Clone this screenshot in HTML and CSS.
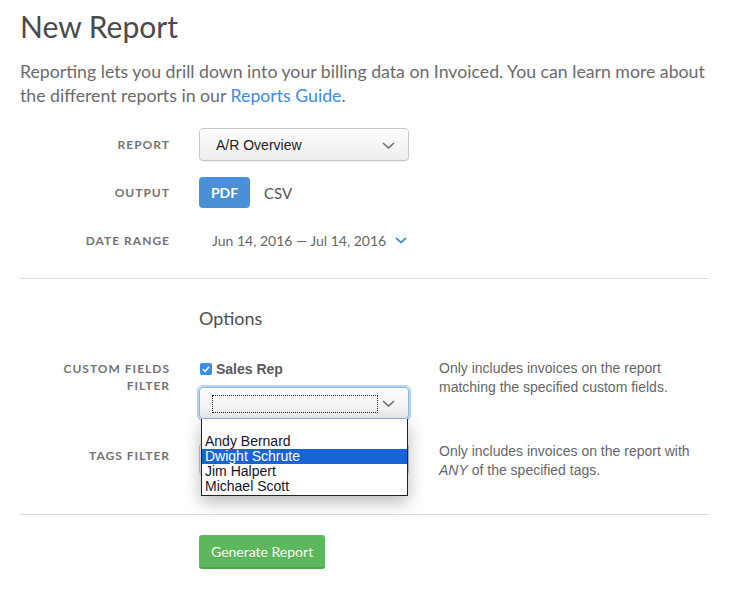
FILE: index.html
```html
<!DOCTYPE html>
<html>
<head>
<meta charset="utf-8">
<link rel="stylesheet" href="styles.css">
</head>
<body>
<div class="page">
  <h1 class="title">New Report</h1>
  <p class="intro">Reporting lets you drill down into your billing data on Invoiced. You can learn more about the different reports in our <a class="link" href="#">Reports Guide</a>.</p>

  <div class="section-top">
    <div class="row row-report">
      <div class="lbl">Report</div>
      <div class="ctrl">
        <div class="select">
          <span class="select-text">A/R Overview</span>
          <svg class="chev" width="13" height="7" viewBox="0 0 13 7"><path d="M1 1 L6.5 6 L12 1" fill="none" stroke="#6b6b6b" stroke-width="1.5"/></svg>
        </div>
      </div>
    </div>
    <div class="row row-output">
      <div class="lbl">Output</div>
      <div class="ctrl toggle">
        <span class="btn-pdf">PDF</span>
        <span class="btn-csv">CSV</span>
      </div>
    </div>
    <div class="row row-date">
      <div class="lbl">Date Range</div>
      <div class="ctrl date">
        <span class="date-text">Jun 14, 2016 — Jul 14, 2016</span>
        <svg class="date-chev" width="12" height="7" viewBox="0 0 12 7"><path d="M1 1 L6 5.5 L11 1" fill="none" stroke="#4a90d9" stroke-width="1.8"/></svg>
      </div>
    </div>
  </div>

  <hr class="divider first">

  <div class="row row-heading">
    <div></div>
    <h2 class="options">Options</h2>
  </div>

  <div class="row row-custom">
    <div class="lbl">Custom Fields<br>Filter</div>
    <div class="ctrl rel">
      <div class="check-line">
        <span class="checkbox"><svg width="12" height="12" viewBox="0 0 12 12"><path d="M3 6.3 L5.1 8.4 L9 3.8" fill="none" stroke="#fff" stroke-width="1.6"/></svg></span>
        <span class="check-label">Sales Rep</span>
      </div>
      <div class="select focused">
        <span class="focus-ring"></span>
        <svg class="chev" width="13" height="7" viewBox="0 0 13 7"><path d="M1 1 L6.5 6 L12 1" fill="none" stroke="#6b6b6b" stroke-width="1.5"/></svg>
      </div>
      <ul class="popup">
        <li class="opt">&nbsp;</li>
        <li class="opt">Andy Bernard</li>
        <li class="opt selected">Dwight Schrute</li>
        <li class="opt">Jim Halpert</li>
        <li class="opt">Michael Scott</li>
      </ul>
    </div>
    <div class="help">Only includes invoices on the report matching the specified custom fields.</div>
  </div>

  <div class="row row-tags">
    <div class="lbl tags-lbl">Tags Filter</div>
    <div class="ctrl">
      <div class="select tags-select"></div>
    </div>
    <div class="help">Only includes invoices on the report with <em>ANY</em> of the specified tags.</div>
  </div>

  <hr class="divider second">

  <div class="row row-submit">
    <div></div>
    <div class="ctrl"><button class="generate">Generate Report</button></div>
  </div>
</div>
</body>
</html>
```
FILE: styles.css
```css
* { box-sizing: border-box; }
body {
  margin: 0;
  background: #fff;
  font-family: Lato, "Open Sans", sans-serif;
  color: #555;
}
.page {
  width: 729px;
  padding: 7px 20px 0 20px;
}
.title {
  margin: 0;
  font-size: 30px;
  line-height: 38px;
  font-weight: 400;
  color: #4a4a4a;
}
.intro {
  margin: 15px 0 0 0;
  font-size: 17.7px;
  line-height: 24px;
  color: #6b6b6b;
}
.link { color: #3d8ddb; text-decoration: none; }

.row {
  display: grid;
  grid-template-columns: 149px 210px 1fr;
  column-gap: 30px;
}
.lbl {
  text-align: right;
  text-transform: uppercase;
  font-weight: 700;
  font-size: 12px;
  line-height: 17px;
  letter-spacing: 1px;
  color: #737373;
  margin-right: -1px;
}
.section-top { margin-top: 20px; }
.row-report, .row-output, .row-date { align-items: center; }
.row-report { height: 33px; }
.row-output { height: 31px; margin-top: 16px; }
.row-date { height: 28px; margin-top: 18px; }

.select {
  position: relative;
  height: 33px;
  border: 1px solid #c9c9c9;
  border-radius: 4px;
  background: linear-gradient(#fefefe, #ededed);
  box-shadow: 0 1px 1px rgba(0,0,0,0.08);
  display: flex;
  align-items: center;
  padding-left: 16px;
}
.select-text {
  font-family: "Liberation Sans", Arial, sans-serif;
  font-size: 14px;
  color: #222;
}
.chev { position: absolute; right: 13px; top: 13px; }

.toggle { display: flex; align-items: center; height: 31px; }
.btn-pdf {
  width: 51px;
  height: 31px;
  border-radius: 4px;
  background: #4a90d9;
  color: #fff;
  font-weight: 700;
  font-size: 14px;
  display: flex;
  align-items: center;
  justify-content: center;
}
.btn-csv {
  margin-left: 14px;
  font-size: 15px;
  color: #555;
}
.date { display: flex; align-items: center; padding-left: 13px; white-space: nowrap; }
.date-text { font-size: 14px; color: #666; }
.date-chev { margin-left: 9px; margin-top: 1px; }

.divider {
  border: 0;
  border-top: 1px solid #dedede;
  height: 0;
  margin: 0;
}
.divider.first { margin-top: 24px; }
.divider.second { margin-top: 34px; }

.row-heading { margin-top: 28px; }
.options {
  margin: 0;
  font-size: 18px;
  line-height: 22px;
  font-weight: 400;
  color: #4f4f4f;
}

.row-custom { margin-top: 31px; align-items: start; }
.rel { position: relative; }
.check-line { display: flex; align-items: center; height: 17px; }
.checkbox {
  width: 12px;
  height: 12px;
  margin-left: 1px;
  border-radius: 2px;
  background: #3a8ef2;
  display: inline-flex;
}
.check-label {
  margin-left: 4px;
  font-family: "Liberation Sans", Arial, sans-serif;
  font-weight: 700;
  font-size: 14px;
  color: #5a5a5a;
}
.select.focused {
  margin-top: 10px;
  height: 32px;
  border-color: #8fb6e6;
  box-shadow: 0 0 0 2px rgba(120,175,235,0.55);
}
.focus-ring {
  position: absolute;
  left: 12px;
  top: 7px;
  width: 166px;
  height: 18px;
  border: 1px dotted #222;
}
.select.focused .chev { top: 12px; }

.popup {
  position: absolute;
  left: 2px;
  top: 59px;
  width: 207px;
  margin: 0;
  padding: 0 0 1px 0;
  list-style: none;
  background: #fff;
  border: 1px solid #222;
  border-top: 0;
  box-shadow: 0 6px 16px rgba(0,0,0,0.28);
  z-index: 5;
}
.opt {
  height: 15px;
  line-height: 15px;
  padding-left: 3px;
  font-family: "Liberation Sans", Arial, sans-serif;
  font-size: 14px;
  color: #141428;
}
.opt.selected { background: #1765d4; color: #fff; }

.help {
  font-family: "Liberation Sans", Arial, sans-serif;
  font-size: 14px;
  line-height: 19px;
  color: #666;
  margin-top: -1px;
  padding-right: 10px;
}
.help em { font-style: italic; }

.row-tags { margin-top: 24px; align-items: start; }
.tags-lbl { margin-top: 4px; }
.tags-select { height: 32px; }

.row-submit { margin-top: 20px; }
.generate {
  height: 34px;
  padding: 0 12px;
  border: 0;
  border-bottom: 2px solid #4aa64a;
  border-radius: 3px;
  background: #5cb85c;
  color: #fff;
  font-family: Lato, sans-serif;
  font-size: 14px;
  text-shadow: 0 1px 0 rgba(0,0,0,0.12);
}
```
